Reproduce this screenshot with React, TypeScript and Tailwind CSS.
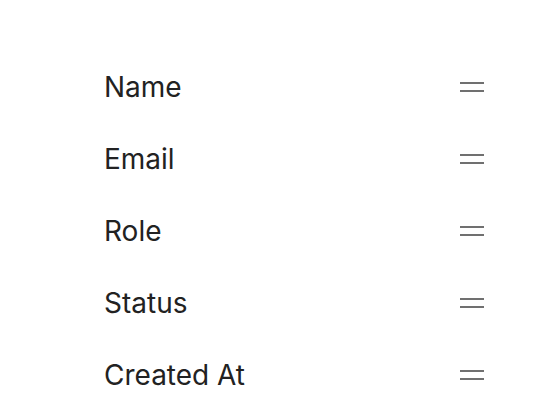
const columns = ["Name", "Email", "Role", "Status", "Created At"];

const DragHandle = () => (
    <svg width="24" height="10" viewBox="0 0 24 10" className="text-[#707070]">
        <rect x="0" y="0" width="24" height="2" fill="currentColor" />
        <rect x="0" y="8" width="24" height="2" fill="currentColor" />
    </svg>
);

export default function App() {
    return (
        <div className="w-[546px] h-[420px] bg-white overflow-hidden" style={{ fontFamily: "Inter, sans-serif" }}>
            <ul className="pt-[51px] pl-[104px] pr-[62px]">
                {columns.map((col) => (
                    <li key={col} className="flex items-center justify-between h-[72px]">
                        <span className="text-[28px] text-[#222222]">{col}</span>
                        <DragHandle />
                    </li>
                ))}
            </ul>
        </div>
    );
}
